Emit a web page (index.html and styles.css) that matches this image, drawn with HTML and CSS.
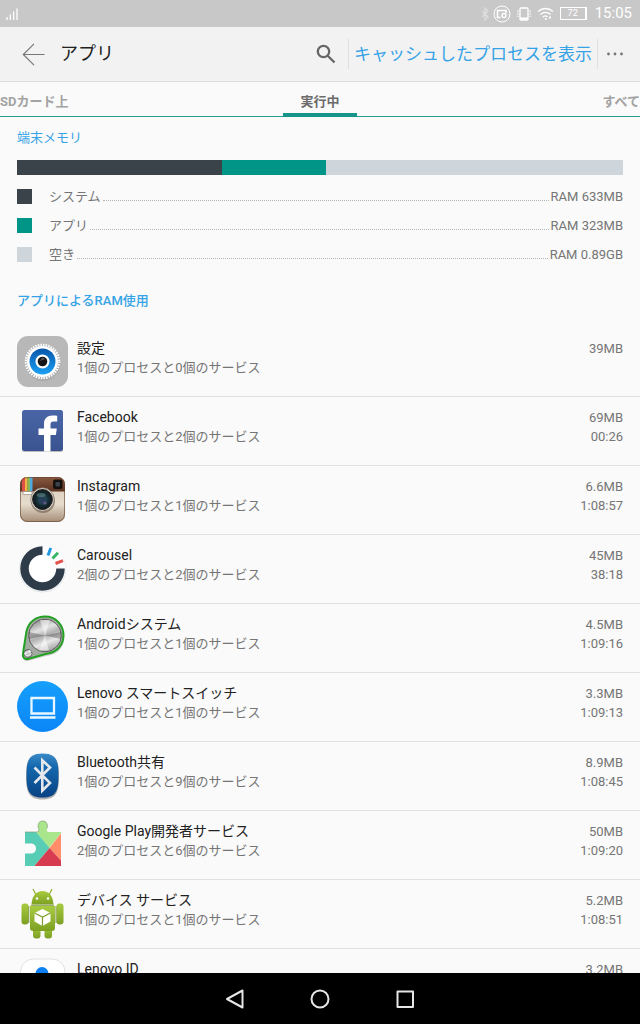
FILE: index.html
```html
<!DOCTYPE html>
<html lang="ja">
<head>
    <meta charset="UTF-8">
    <meta name="viewport" content="width=device-width, initial-scale=1.0">
    <title>アプリ</title>
    <link rel="stylesheet" href="styles.css">
</head>

<body>
    <div class="status-bar">
        <svg class="status-signal" width="12" height="12" viewBox="0 0 12 12" stroke="#fff" stroke-width="1.3"><path d="M1 12V9M4.3 12V6.500M7.600 12V3.500M11 12V.5"/></svg>
        <svg class="status-dim" width="8" height="14" viewBox="0 0 8 14" fill="none" stroke="#fff" stroke-width="1.200"><path d="M1 4l6 6-3 3V1l3 3-6 6"/></svg>
        <svg class="status-cast" width="18" height="18" viewBox="0 0 18 18" fill="none" stroke="#fff"><circle cx="9" cy="9" r="8"/><path stroke-width="1.500" d="M7.500 12.500h-3v-7h8.500v2.500"/><circle cx="11" cy="10.500" r="2" stroke-width="1.400"/></svg>
        <svg class="status-vibrate" width="14" height="14" viewBox="0 0 14 14" fill="none" stroke="#fff"><rect x="3" y="1" width="8" height="12" rx="1" stroke-width="1.300"/><path stroke-width="2" d="M3 11.500h8"/><path d="M1 3v2l-.5 1 .5 1v3M13 3v2l.5 1-.5 1v3" stroke-dasharray="2 1"/></svg>
        <svg class="status-wifi" width="17" height="13" viewBox="0 0 17 13" fill="none" stroke="#fff" stroke-width="1.300"><path d="M1 4.500c4.500-4 10.500-4 15 0M3.500 7.500c3-2.700 7-2.700 10 0M6 10c1.500-1.300 3.300-1.300 4.500 0"/><path d="M8 12h1.500M13 9.500v2" stroke-width="2"/></svg>
        <span class="battery">72</span>
        <span class="clock">15:05</span>
    </div>

    <header class="header">
        <button type="button" class="back-btn" aria-label="戻る">
            <svg width="23" height="23" viewBox="0 0 23 23" fill="none" stroke="#777" stroke-width="1.200"><path d="M12 .8L1.300 11.500 12 22.200M1.300 11.500H22.500"/></svg>
        </button>
        <h1 class="header-title">アプリ</h1>
        <button type="button" class="search-btn" aria-label="検索">
            <svg width="20" height="20" viewBox="0 0 20 20" fill="none" stroke="#666" stroke-width="2.300"><circle cx="7.500" cy="7.500" r="5.700"/><path d="M11.700 11.700l6.800 6.800"/></svg>
        </button>
        <button type="button" class="cached-btn">キャッシュしたプロセスを表示</button>
        <button type="button" class="more-btn" aria-label="その他">
            <svg width="16" height="4" viewBox="0 0 16 4" fill="#777"><circle cx="1.500" cy="2" r="1.400"/><circle cx="8" cy="2" r="1.400"/><circle cx="14.500" cy="2" r="1.400"/></svg>
        </button>
    </header>

    <nav class="tabs">
        <a href="#sd" class="tab">SDカード上</a>
        <a href="#running" class="tab tab-active" aria-current="page">実行中</a>
        <a href="#all" class="tab">すべて</a>
    </nav>

    <main class="content">
        <h2 class="section-title">端末メモリ</h2>
        <div class="memory-bar">
            <div class="memory-system" style="width: 33.8%"></div>
            <div class="memory-apps" style="width: 17.2%"></div>
        </div>
        <ul class="legend">
            <li><i class="swatch memory-system"></i><span>システム</span><span class="leader"></span><span>RAM 633MB</span></li>
            <li><i class="swatch memory-apps"></i><span>アプリ</span><span class="leader"></span><span>RAM 323MB</span></li>
            <li><i class="swatch memory-free"></i><span>空き</span><span class="leader"></span><span>RAM 0.89GB</span></li>
        </ul>

        <h2 class="section-title section-apps">アプリによるRAM使用</h2>
        <ul class="app-list">
            <li>
                <a href="#settings" class="app">
                    <svg class="app-icon" viewBox="0 0 51 51">
                        <defs><linearGradient id="gear-blue" x2="0" y2="1"><stop offset="0" stop-color="#0756a8"/><stop offset="1" stop-color="#1ba0f4"/></linearGradient></defs>
                        <rect width="51" height="51" rx="11" fill="#b8b8b8"/>
                        <circle cx="26" cy="28" r="17" fill="#999" opacity=".5"/>
                        <circle cx="25.500" cy="25.500" r="15.500" fill="#fff"/>
                        <circle cx="25.500" cy="25.500" r="16.600" fill="none" stroke="#fff" stroke-width="2.400" stroke-dasharray="1.500 1.107"/>
                        <circle cx="25.500" cy="25.500" r="13" fill="url(#gear-blue)"/>
                        <circle cx="25.500" cy="25.500" r="7" fill="#fff"/>
                        <circle cx="25.500" cy="25.500" r="4.800" fill="#151515"/>
                        <path d="M22.500 25l3-3.500 3 1.500z" fill="#555"/>
                    </svg>
                    <span class="app-text"><span class="app-name">設定</span><span class="app-detail">1個のプロセスと0個のサービス</span></span>
                    <span class="app-usage"><span>39MB</span></span>
                </a>
            </li>
            <li>
                <a href="#facebook" class="app">
                    <svg class="app-icon" viewBox="0 0 51 51">
                        <defs><linearGradient id="fb-blue" x2="0" y2="1"><stop offset="0" stop-color="#4a66a6"/><stop offset="1" stop-color="#3a5390"/></linearGradient></defs>
                        <rect x="5" y="6" width="41" height="41" rx="2.500" fill="#bbb"/>
                        <rect x="5" y="5" width="41" height="41" rx="2.500" fill="url(#fb-blue)"/>
                        <path fill="#fff" d="M27 46.500V30h-5.500v-6.500H27V19c0-5.500 3.200-8.500 8.500-8.500 2 0 3.700.1 4.700.3v5.700h-3.400c-2.600 0-3.300 1.200-3.300 3.200v3.800h6.300l-.9 6.500h-5.400v16.500z"/>
                    </svg>
                    <span class="app-text"><span class="app-name">Facebook</span><span class="app-detail">1個のプロセスと2個のサービス</span></span>
                    <span class="app-usage"><span>69MB</span><span>00:26</span></span>
                </a>
            </li>
            <li>
                <a href="#instagram" class="app">
                    <svg class="app-icon" viewBox="0 0 51 51">
                        <defs>
                            <clipPath id="ig-clip"><rect x="3" y="3" width="45" height="45" rx="7"/></clipPath>
                            <linearGradient id="ig-brown" x2="0" y2="1"><stop offset="0" stop-color="#8b5a42"/><stop offset="1" stop-color="#59311f"/></linearGradient>
                            <linearGradient id="ig-body" x2="0" y2="1"><stop offset="0" stop-color="#d5c7b4"/><stop offset=".6" stop-color="#e6dccd"/><stop offset="1" stop-color="#a58d76"/></linearGradient>
                            <radialGradient id="ig-lens"><stop offset="0" stop-color="#447080"/><stop offset=".5" stop-color="#173840"/><stop offset="1" stop-color="#101418"/></radialGradient>
                        </defs>
                        <g clip-path="url(#ig-clip)">
                            <rect x="3" y="3" width="45" height="45" fill="url(#ig-body)"/>
                            <rect x="3" y="3" width="45" height="14.500" fill="url(#ig-brown)"/>
                            <path fill="#dd5148" d="M5 3h3v14H5z"/><path fill="#f2b544" d="M8 3h2.500v14H8z"/><path fill="#85b95a" d="M10.500 3H13v14h-2.500z"/><path fill="#4faadd" d="M13 3h2.500v14H13z"/>
                        </g>
                        <rect x="3.500" y="3.500" width="44" height="44" rx="7" fill="none" stroke="#60402c" opacity=".6"/>
                        <rect x="36" y="5.500" width="9.500" height="9.500" rx="2" fill="#15100e"/>
                        <rect x="38.500" y="8" width="4.500" height="4.500" rx="1" fill="#39424d"/>
                        <rect x="6" y="17.500" width="9" height="3" rx="1" fill="#fff" stroke="#877767" stroke-width=".6"/>
                        <circle cx="26" cy="27" r="12" fill="#5c4738" opacity=".5"/>
                        <circle cx="25.500" cy="25.500" r="11.700" fill="#dbd6cd" stroke="#74675c" stroke-width=".6"/>
                        <circle cx="25.500" cy="25.500" r="9.800" fill="url(#ig-lens)" stroke="#222" stroke-width="1.200"/>
                        <circle cx="25.500" cy="26.500" r="4" fill="#283f59"/>
                        <ellipse cx="24" cy="21" rx="4.500" ry="2" fill="#83aaa5" opacity=".4"/>
                        <circle cx="28" cy="29" r="1.500" fill="#67588a"/>
                    </svg>
                    <span class="app-text"><span class="app-name">Instagram</span><span class="app-detail">1個のプロセスと1個のサービス</span></span>
                    <span class="app-usage"><span>6.6MB</span><span>1:08:57</span></span>
                </a>
            </li>
            <li>
                <a href="#carousel" class="app">
                    <svg class="app-icon" viewBox="0 0 51 51">
                        <circle cx="25.500" cy="26" r="23.500" fill="#dfe3e6"/>
                        <circle cx="25.500" cy="25.500" r="23" fill="#fff"/>
                        <path d="M25.500 7.500a18 18 0 1 0 18 18" fill="none" stroke="#2e3b49" stroke-width="8.500"/>
                        <g stroke-width="3"><path stroke="#239ae0" d="M31 12.500l2.800-7.500"/><path stroke="#35b768" d="M35.500 15.500l5.500-5.700"/><path stroke="#e5524c" d="M38.500 20.500l7.500-2.800"/></g>
                    </svg>
                    <span class="app-text"><span class="app-name">Carousel</span><span class="app-detail">2個のプロセスと2個のサービス</span></span>
                    <span class="app-usage"><span>45MB</span><span>38:18</span></span>
                </a>
            </li>
            <li>
                <a href="#android-system" class="app">
                    <svg class="app-icon" viewBox="0 0 51 51">
                        <defs><linearGradient id="metal" x1=".3" x2=".7" y2="1"><stop offset="0" stop-color="#8c8c8c"/><stop offset=".3" stop-color="#e2e2e2"/><stop offset=".5" stop-color="#b0b0b0"/><stop offset=".7" stop-color="#e8e8e8"/><stop offset="1" stop-color="#999"/></linearGradient></defs>
                        <path d="M10 20C13 10 20 6 28 6s19 8 19 19c0 12-8 18-18 19l-18 5c-4 0-6-2-5-6z" fill="#777" opacity=".35"/>
                        <path d="M9.500 19C12 9 20 4.500 28 4.500c11 0 18.500 8.500 18.500 19 0 11-8 17.500-18 18.500L11 47c-3.500.7-6-2-5-5.500z" fill="#a3aaa1" stroke="#22a122" stroke-width="2"/>
                        <circle cx="28" cy="23.500" r="16.300" fill="url(#metal)" stroke="#444" stroke-width=".8"/>
                        <path d="M28 23.500L11.800 20v7zM28 23.500L44.200 20v7z" fill="#333" opacity=".35"/>
                        <path d="M28 23.500L23 8h10zM28 23.500L22 38.500h10z" fill="#fff" opacity=".5"/>
                        <circle cx="11" cy="41.500" r="4" fill="url(#metal)" stroke="#333" stroke-width=".6"/>
                        <path d="M11 41.500l-3.500-1v2.500zM11 41.500l1.500-3.700 2 2z" fill="#fff" opacity=".8"/>
                    </svg>
                    <span class="app-text"><span class="app-name">Androidシステム</span><span class="app-detail">1個のプロセスと1個のサービス</span></span>
                    <span class="app-usage"><span>4.5MB</span><span>1:09:16</span></span>
                </a>
            </li>
            <li>
                <a href="#smart-switch" class="app">
                    <svg class="app-icon" viewBox="0 0 51 51">
                        <defs><linearGradient id="switch-blue" x2="0" y2="1"><stop offset="0" stop-color="#169ffb"/><stop offset="1" stop-color="#0b86f8"/></linearGradient></defs>
                        <circle cx="25.500" cy="25.500" r="25.500" fill="url(#switch-blue)"/>
                        <path d="M14.500 17h22.500v15.500h-22.500zM13 36.500h25.500" fill="none" stroke="#e8f6ff" stroke-width="2.300"/>
                    </svg>
                    <span class="app-text"><span class="app-name">Lenovo スマートスイッチ</span><span class="app-detail">1個のプロセスと1個のサービス</span></span>
                    <span class="app-usage"><span>3.3MB</span><span>1:09:13</span></span>
                </a>
            </li>
            <li>
                <a href="#bluetooth" class="app">
                    <svg class="app-icon" viewBox="0 0 51 51">
                        <defs><linearGradient id="bt-blue" x2="0" y2="1"><stop offset="0" stop-color="#3b8ac9"/><stop offset=".3" stop-color="#1568ae"/><stop offset="1" stop-color="#084283"/></linearGradient></defs>
                        <path d="M9 26C9 11 11 4.500 25.500 4.500S42 11 42 26s-2 23.500-16.500 23.500S9 41 9 26z" fill="#666" opacity=".5"/>
                        <path d="M9.500 25.500C9.500 10 12 3.500 25.500 3.500s16 6.500 16 22-2.500 22-16 22-16-6.500-16-22z" fill="url(#bt-blue)"/>
                        <path d="M17.500 17.500l15.500 15.500-7.700 7.700V10.300l7.700 7.200-15.500 15.500" fill="none" stroke="#e4e8ec" stroke-width="2.600"/>
                    </svg>
                    <span class="app-text"><span class="app-name">Bluetooth共有</span><span class="app-detail">1個のプロセスと9個のサービス</span></span>
                    <span class="app-usage"><span>8.9MB</span><span>1:08:45</span></span>
                </a>
            </li>
            <li>
                <a href="#play-services" class="app">
                    <svg class="app-icon" viewBox="0 0 51 51">
                        <defs><clipPath id="puzzle"><path d="M8 13h11.500c2.500 0 3-1.500 2.200-3.300C20 5.500 22 2 25.700 2s5.800 3.500 4.100 7.700c-.8 1.800-.3 3.300 2.200 3.300h12v34H8V34.500h5.500c3.500 0 5.500-2 5.500-5s-2-5-5.500-5H8z"/></clipPath></defs>
                        <g clip-path="url(#puzzle)">
                            <path fill="#a9e68b" d="M8 0h36v14L32 29 19 13z"/>
                            <path fill="#a9e68b" d="M19 0h26v13H19z"/>
                            <path fill="#57cdb5" d="M0 13h19l13.500 16L17 47.500H0z"/>
                            <path fill="#ff8d69" d="M44.500 13.500L32.500 29l12 13z"/>
                            <path fill="#d63b50" d="M32.500 29L17 47.500h27.500V42z"/>
                        </g>
                        <path d="M8 13h11.500c2.500 0 3-1.500 2.200-3.300C20 5.500 22 2 25.700 2s5.800 3.500 4.100 7.700" fill="none" stroke="#879b7c" stroke-width=".7"/>
                    </svg>
                    <span class="app-text"><span class="app-name">Google Play開発者サービス</span><span class="app-detail">2個のプロセスと6個のサービス</span></span>
                    <span class="app-usage"><span>50MB</span><span>1:09:20</span></span>
                </a>
            </li>
            <li>
                <a href="#device-service" class="app">
                    <svg class="app-icon" viewBox="0 0 51 51">
                        <defs><linearGradient id="robot" x2="0" y2="1"><stop offset="0" stop-color="#a7cb3f"/><stop offset="1" stop-color="#7da023"/></linearGradient></defs>
                        <g fill="url(#robot)">
                            <path d="M14.500 16.500C15 8 19 3 25.500 3s10.500 5 11 13.500z"/>
                            <rect x="4.500" y="15.500" width="7" height="21" rx="3"/>
                            <rect x="39.500" y="15.500" width="7" height="21" rx="3"/>
                            <rect x="16" y="36" width="7.500" height="14.500" rx="3"/>
                            <rect x="27.500" y="36" width="7.500" height="14.500" rx="3"/>
                            <path d="M13 18h25v22a3 3 0 0 1-3 3H16a3 3 0 0 1-3-3z"/>
                        </g>
                        <path d="M18.500 6L16 1M32.500 6L35 1" stroke="#8fae32" stroke-width="1.200"/>
                        <path d="M14 17.300h23M11.800 18v17M39 18v17" stroke="#63801b" stroke-width=".8"/>
                        <circle cx="20" cy="10.500" r="1.200" fill="#fff"/><circle cx="31" cy="10.500" r="1.200" fill="#fff"/>
                        <path fill="#fff" d="M25.500 21l8 4v8.500l-8 4.500-8-4.500V25z"/>
                        <path d="M17.500 25l8 4 8-4M25.500 29v9" fill="none" stroke="#7e9f2a" stroke-width="1.200"/>
                    </svg>
                    <span class="app-text"><span class="app-name">デバイス サービス</span><span class="app-detail">1個のプロセスと1個のサービス</span></span>
                    <span class="app-usage"><span>5.2MB</span><span>1:08:51</span></span>
                </a>
            </li>
            <li>
                <a href="#lenovo-id" class="app">
                    <svg class="app-icon" viewBox="0 0 51 51">
                        <rect x="3.500" y="2" width="44.500" height="46" rx="13" fill="#fff" stroke="#e2e2e2"/>
                        <circle cx="25" cy="16.500" r="6.500" fill="#0c7ff2"/>
                        <path fill="#0c7ff2" d="M12 40c0-9 5-14 13-14s13 5 13 14z"/>
                    </svg>
                    <span class="app-text"><span class="app-name">Lenovo ID</span></span>
                    <span class="app-usage"><span>3.2MB</span></span>
                </a>
            </li>
        </ul>
    </main>

    <footer class="nav-bar">
        <button type="button" aria-label="戻る"><svg width="20" height="20" viewBox="0 0 20 20"><path d="M17.500 1.500v17L2 10z"/></svg></button>
        <button type="button" aria-label="ホーム"><svg width="20" height="20" viewBox="0 0 20 20"><circle cx="10" cy="10" r="8.500"/></svg></button>
        <button type="button" aria-label="履歴"><svg width="20" height="20" viewBox="0 0 20 20"><rect x="2.500" y="2.500" width="15.500" height="15.500"/></svg></button>
    </footer>
</body>
</html>
```

FILE: styles.css
```css
* {
    box-sizing: border-box;
}

body {
    display: flex;
    flex-direction: column;
    height: 100vh;
    margin: 0;
    background-color: #fafafa;
    color: #757575;
    font-family: Roboto, "Noto Sans CJK JP", sans-serif;
    font-size: 13px;
    line-height: 19px;
}

h1, h2, ul {
    margin: 0;
    padding: 0;
    list-style: none;
}

a {
    color: inherit;
    text-decoration: none;
}

button {
    padding: 0;
    border: 0;
    background: none;
    color: inherit;
    font: inherit;
    cursor: pointer;
}

svg {
    display: block;
    flex-shrink: 0;
}

/* Status bar */
.status-bar {
    display: flex;
    align-items: center;
    flex-shrink: 0;
    gap: 6px;
    height: 27px;
    padding: 0 8px 0 6px;
    background-color: #c8c8c8;
    color: #fff;
}

.status-signal {
    margin-right: auto;
}

.status-dim {
    margin-right: -2px;
    opacity: .4;
}

.battery {
    width: 27px;
    height: 13px;
    margin-right: 2px;
    border: 1px solid #fff;
    border-right-width: 2px;
    font-size: 9px;
    line-height: 11px;
    text-align: center;
}

.clock {
    font-size: 15px;
}

/* Header */
.header {
    display: flex;
    align-items: center;
    flex-shrink: 0;
    height: 55px;
    padding: 0 17px 0 22px;
    background-color: #f2f2f2;
    border-bottom: 1px solid #dcdcdc;
}

.header-title {
    margin: 0 auto 0 15px;
    color: #212121;
    font-size: 18px;
    font-weight: 400;
    line-height: 28px;
}

.search-btn {
    margin-right: 12px;
}

.cached-btn {
    padding: 0 5px;
    border: solid #e0e0e0;
    border-width: 0 1px;
    color: #36a3e6;
    font-size: 17px;
    line-height: 30px;
}

.more-btn {
    margin-left: 9px;
}

/* Tabs */
.tabs {
    display: grid;
    grid-template-columns: 1fr auto 1fr;
    flex-shrink: 0;
    height: 35px;
    border-bottom: 1px solid #2a9d93;
    font-weight: 700;
    line-height: 39px;
}

.tab {
    color: #a3a3a3;
}

.tab:last-child {
    text-align: right;
}

.tab-active {
    height: 35px;
    padding: 0 17px;
    border-bottom: 4px solid #159588;
    color: #6b6b6b;
}

/* Memory */
.content {
    flex: 1;
    min-height: 0;
    padding-top: 11px;
    overflow-y: auto;
    scrollbar-width: none;
}

.section-title {
    padding: 0 17px;
    color: #36a3e6;
    font-size: 13px;
    font-weight: 400;
    line-height: 20px;
}

.section-apps {
    margin: 22px 0 17px;
    font-weight: 500;
}

.memory-bar {
    display: flex;
    height: 15px;
    margin: 12px 17px 7px;
    background-color: #ced6db;
}

.memory-system {
    background-color: #3a424a;
}

.memory-apps {
    background-color: #019587;
}

.memory-free {
    background-color: #ced6db;
}

.legend {
    padding: 0 17px;
}

.legend li {
    display: flex;
    align-items: baseline;
    line-height: 29px;
}

.swatch {
    align-self: center;
    width: 15px;
    height: 15px;
    margin-right: 17px;
}

.leader {
    flex: 1;
    margin: 0 2px;
    border-bottom: 1px dotted #b5b5b5;
}

/* App list */
.app {
    display: flex;
    gap: 9px;
    height: 69px;
    padding: 8px 17px;
    border-bottom: 1px solid #e0e0e0;
}

.app-icon {
    width: 51px;
    height: 51px;
}

.app-text {
    display: flex;
    flex: 1;
    flex-direction: column;
    padding-top: 3px;
}

.app-name {
    color: #212121;
    font-size: 14px;
}

.app-usage {
    display: flex;
    flex-direction: column;
    padding-top: 3px;
    text-align: right;
}

/* Navigation bar */
.nav-bar {
    display: flex;
    align-items: center;
    justify-content: center;
    flex-shrink: 0;
    gap: 65px;
    height: 51px;
    background-color: #000;
}

.nav-bar svg {
    fill: none;
    stroke: #e6e6e6;
    stroke-width: 2;
    stroke-linejoin: round;
}
```
